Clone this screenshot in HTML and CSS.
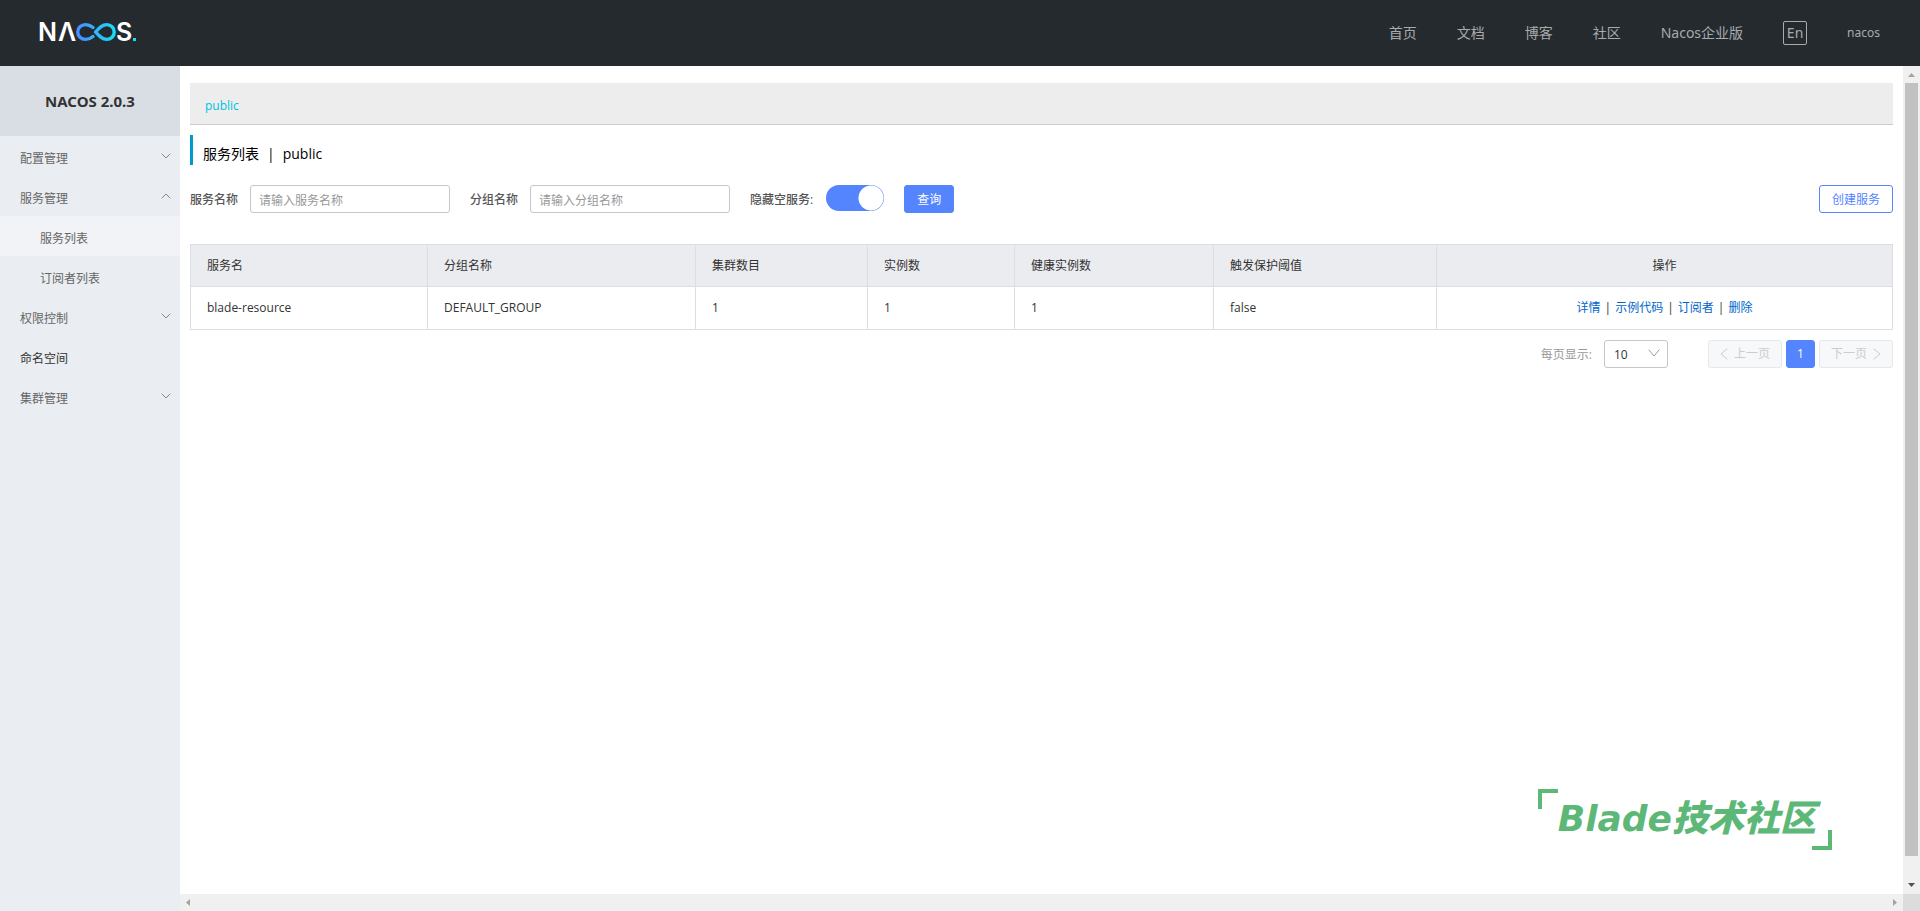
FILE: index.html
```html
<!DOCTYPE html>
<html lang="zh-CN">
<head>
<meta charset="utf-8">
<title>Nacos</title>
<link rel="stylesheet" href="styles.css">
</head>
<body>
<header class="header">
  <a class="logo" href="#" aria-label="Nacos">
    <svg width="102" height="40" viewBox="-4 -10 102 40">
      <defs>
        <linearGradient id="loop" gradientUnits="userSpaceOnUse" x1="36" y1="0" x2="76" y2="0">
          <stop offset="0" stop-color="#4a8bff"/>
          <stop offset="1" stop-color="#16e0f6"/>
        </linearGradient>
      </defs>
      <text class="logo-letter" x="-2" y="18">N</text>
      <text class="logo-letter" x="18" y="18">Λ</text>
      <path d="M53 4.500C50.600 2.500 48.500 1.600 45.500 1.600C41 1.600 37.700 4.800 37.700 9C37.700 13.200 41 16.400 45.500 16.400C48.500 16.400 50.600 15.500 53 13.500M55.500 9C59 5.200 62 1.600 66.800 1.600C71 1.600 74.200 4.800 74.200 9C74.200 13.200 71 16.400 66.800 16.400C62 16.400 59 12.800 55.500 9Z" fill="none" stroke="url(#loop)" stroke-width="3.400"/>
      <text class="logo-letter" x="76" y="18">S</text>
      <rect x="93" y="15" width="3" height="3" fill="#16e0f6"/>
    </svg>
  </a>
  <nav class="nav">
    <a href="#">首页</a>
    <a href="#">文档</a>
    <a href="#">博客</a>
    <a href="#">社区</a>
    <a href="#">Nacos企业版</a>
    <button class="lang" type="button">En</button>
    <a class="user" href="#">nacos</a>
  </nav>
</header>
<div class="body">
  <aside class="sidebar">
    <h1 class="version">NACOS 2.0.3</h1>
    <ul class="menu">
      <li><a href="#">配置管理<svg class="chev" viewBox="0 0 10 10"><path d="M1 3l4 4 4-4"/></svg></a></li>
      <li><a href="#">服务管理<svg class="chev" viewBox="0 0 10 10"><path d="M1 7l4-4 4 4"/></svg></a></li>
      <li><a class="sub active" href="#">服务列表</a></li>
      <li><a class="sub" href="#">订阅者列表</a></li>
      <li><a href="#">权限控制<svg class="chev" viewBox="0 0 10 10"><path d="M1 3l4 4 4-4"/></svg></a></li>
      <li><a class="single" href="#">命名空间</a></li>
      <li><a href="#">集群管理<svg class="chev" viewBox="0 0 10 10"><path d="M1 3l4 4 4-4"/></svg></a></li>
    </ul>
  </aside>
  <div class="pane">
    <main class="content">
      <div class="namespaces"><a href="#">public</a></div>
      <h2 class="title"><span>服务列表</span><span>|</span><span>public</span></h2>
      <form class="search">
        <label for="service">服务名称</label>
        <input class="text" id="service" type="text" placeholder="请输入服务名称">
        <label for="group">分组名称</label>
        <input class="text" id="group" type="text" placeholder="请输入分组名称">
        <label for="hide">隐藏空服务:</label>
        <input class="switch" id="hide" type="checkbox" role="switch" checked>
        <button class="btn primary" type="button">查询</button>
        <button class="btn outline" type="button">创建服务</button>
      </form>
      <table class="table">
        <colgroup><col class="c1"><col class="c2"><col class="c3"><col class="c4"><col class="c5"><col class="c6"><col></colgroup>
        <thead>
          <tr><th>服务名</th><th>分组名称</th><th>集群数目</th><th>实例数</th><th>健康实例数</th><th>触发保护阈值</th><th class="ops">操作</th></tr>
        </thead>
        <tbody>
          <tr><td>blade-resource</td><td>DEFAULT_GROUP</td><td>1</td><td>1</td><td>1</td><td>false</td>
            <td class="ops"><a href="#">详情</a><span class="bar">|</span><a href="#">示例代码</a><span class="bar">|</span><a href="#">订阅者</a><span class="bar">|</span><a href="#">删除</a></td></tr>
        </tbody>
      </table>
      <div class="pager">
        <label for="size">每页显示:</label>
        <span class="select">
          <select id="size"><option>10</option></select>
          <svg viewBox="0 0 12 12"><path d="M1 3l5 6 5-6"/></svg>
        </span>
        <div class="pages">
          <button class="page" type="button" disabled><svg viewBox="0 0 8 12"><path d="M7 1L1 6l6 5"/></svg>上一页</button>
          <button class="page current" type="button">1</button>
          <button class="page" type="button" disabled>下一页<svg viewBox="0 0 8 12"><path d="M1 1l6 5-6 5"/></svg></button>
        </div>
      </div>
      <div class="community">Blade<span>技术社区</span></div>
    </main>
    <div class="vbar">
      <svg viewBox="0 0 17 17"><path d="M5 11h7L8.500 7z" fill="#a3a3a3"/></svg>
      <div class="thumb"></div>
      <svg viewBox="0 0 17 17"><path d="M5 6h7l-3.500 4z" fill="#505050"/></svg>
    </div>
    <div class="hbar">
      <svg viewBox="0 0 17 17"><path d="M10 5v7L6 8.500z" fill="#a3a3a3"/></svg>
      <svg viewBox="0 0 17 17"><path d="M7 5v7l4-3.500z" fill="#a3a3a3"/></svg>
    </div>
    <div class="corner"></div>
  </div>
</div>
</body>
</html>
```
FILE: styles.css
```css
* { box-sizing: border-box; }
body {
  margin: 0;
  height: 100vh;
  display: flex;
  flex-direction: column;
  font: 12px/18px "Open Sans", "Noto Sans CJK SC", sans-serif;
  color: #333;
  background: #fff;
}
a { color: inherit; text-decoration: none; }
button, input, select { font: inherit; }

.header {
  display: flex;
  align-items: center;
  justify-content: space-between;
  height: 66px;
  flex: none;
  padding: 0 40px 0 36px;
  background: #252a2f;
}
.logo svg { display: block; }
.logo-letter { font: 600 25px Inter, sans-serif; fill: #fff; }
.nav {
  display: flex;
  align-items: center;
  gap: 40px;
  font-family: "Noto Sans", "Noto Sans CJK SC", sans-serif;
  font-size: 14px;
  color: #a8aaac;
}
.lang {
  width: 24px;
  height: 24px;
  padding: 0;
  border: 1px solid #a8aaac;
  border-radius: 2px;
  background: none;
  color: inherit;
  font-size: 14px;
  line-height: 20px;
}
.user { font-size: 12px; }

.body { flex: 1; display: flex; min-height: 0; }
.sidebar { width: 180px; flex: none; background: #eaedf1; }
.version {
  margin: 0;
  height: 70px;
  background: #d9dee4;
  font-family: "Noto Sans", sans-serif;
  font-size: 15px;
  line-height: 70px;
  text-align: center;
}
.menu { margin: 0; padding: 0; list-style: none; }
.menu a {
  display: flex;
  align-items: center;
  justify-content: space-between;
  height: 40px;
  padding: 6px 9px 0 20px;
  color: #666;
}
.menu .sub { padding-left: 40px; }
.menu .active { background: #f1f3f7; }
.menu .single { color: #333; }
.chev { width: 10px; height: 10px; margin-bottom: 6px; }
svg path { stroke-linecap: round; stroke-linejoin: round; }
.chev path { fill: none; stroke: #888; }

.pane {
  flex: 1;
  min-width: 0;
  display: grid;
  grid-template: 1fr 17px / 1fr 17px;
}
.content { position: relative; min-width: 0; padding: 17px 10px 0; }
.namespaces {
  height: 42px;
  padding: 0 15px;
  line-height: 45px;
  background: #ededed;
  border-bottom: 1px solid #ccc;
  color: #00c1de;
}
.title {
  display: flex;
  gap: 8px;
  margin: 10px 0 20px;
  padding-left: 10px;
  border-left: 3px solid #09c;
  font-size: 14px;
  font-weight: 400;
  line-height: 38px;
  height: 30px;
  color: #000;
}
.search { display: flex; align-items: center; height: 28px; }
.search label { margin-right: 12px; padding-top: 2px; font-weight: 500; color: #555; }
.text {
  width: 200px;
  height: 28px;
  margin-right: 20px;
  padding: 2px 8px 0;
  border: 1px solid #c4c6cf;
  border-radius: 3px;
}
.text::placeholder { color: #999; }
.switch {
  appearance: none;
  width: 58px;
  height: 26px;
  margin: 0 20px 2px 1px;
  border-radius: 13px;
  background: radial-gradient(circle at 45px 13px, #fff 12px, #5584ff 13px);
}
.btn {
  height: 28px;
  padding: 2px 12px 0;
  border: 1px solid #5584ff;
  border-radius: 3px;
}
.primary { background: #5584ff; color: #fff; }
.outline { margin-left: auto; background: #fff; color: #5584ff; }

.table {
  width: 100%;
  margin-top: 31px;
  border-collapse: collapse;
  table-layout: fixed;
}
.c1 { width: 237px; }
.c2 { width: 268px; }
.c3 { width: 172px; }
.c4 { width: 147px; }
.c5 { width: 199px; }
.c6 { width: 223px; }
.table th, .table td {
  height: 43px;
  padding: 0 16px;
  border: 1px solid #dcdee3;
  font-weight: 400;
  text-align: left;
}
.table th { height: 42px; background: #ebecf0; }
.table .ops { text-align: center; }
.ops a { color: #06c; }
.bar { padding: 0 4px; }

.pager {
  display: flex;
  justify-content: flex-end;
  align-items: center;
  height: 28px;
  margin-top: 10px;
  color: #999;
}
.pager label { margin-right: 12px; padding-top: 1px; }
.select { position: relative; margin-right: 40px; }
.select select {
  appearance: none;
  display: block;
  width: 64px;
  height: 28px;
  padding: 2px 9px 0;
  border: 1px solid #c4c6cf;
  border-radius: 3px;
  background: #fff;
  color: #333;
}
.select svg { position: absolute; right: 8px; top: 7px; width: 12px; height: 12px; }
.pager path { fill: none; stroke: currentColor; }
.pages { display: flex; gap: 4px; }
.page {
  display: flex;
  align-items: center;
  justify-content: center;
  gap: 6px;
  width: 74px;
  height: 28px;
  padding: 0;
  border: 1px solid #e6e7eb;
  border-radius: 3px;
  background: #f7f8fa;
  color: #ccc;
}
.page svg { width: 8px; height: 12px; }
.current { width: 29px; background: #5584ff; border-color: #5584ff; color: #fff; }

.community {
  position: absolute;
  right: 71px;
  bottom: 44px;
  padding: 12px 16px 13px 20px;
  font: italic 700 36px/36px "DejaVu Sans", sans-serif;
  color: #5db878;
  white-space: nowrap;
}
.community span { font: italic 900 36px/1px "Noto Sans CJK SC", sans-serif; }
.community::before, .community::after {
  content: "";
  position: absolute;
  width: 16px;
  height: 16px;
  border: 0 solid #5db878;
}
.community::before { left: 0; top: 0; border-width: 4px 0 0 4px; }
.community::after { right: 0; bottom: 0; border-width: 0 4px 4px 0; }

.vbar, .hbar { display: flex; background: #f0f0f0; }
.vbar { flex-direction: column; }
.vbar svg, .hbar svg { width: 17px; height: 17px; flex: none; }
.vbar svg:last-child { margin-top: auto; }
.hbar { justify-content: space-between; }
.thumb { height: 95%; flex: 0 1 auto; margin: 0 2px 21px; background: #c1c1c1; }
.corner { background: #dcdcdc; }
```
